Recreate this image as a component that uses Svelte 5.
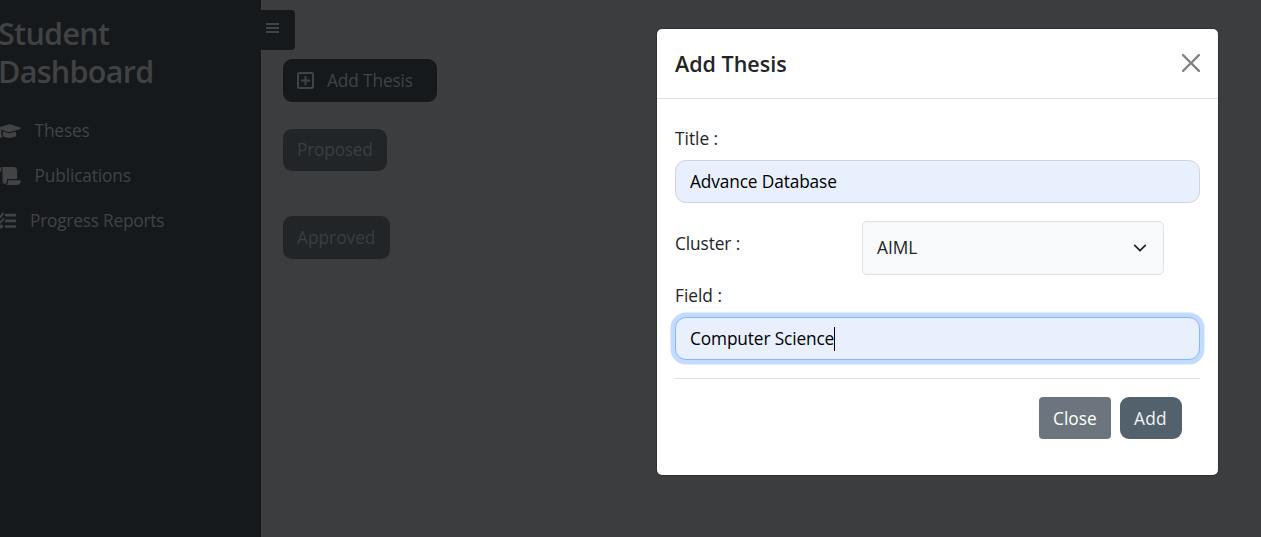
<script lang="ts">
  let title = $state('Advance Database');
  let field = $state('Computer Science');
</script>

<div class="page">
  <aside class="sidebar">
    <h1>Student<br />Dashboard</h1>
    <nav>
      <a class="theses" href="#theses">
        <svg width="23" height="18" viewBox="0 0 640 512"><path fill="currentColor" d="M622.34 153.2L343.4 67.5c-15.2-4.67-31.6-4.67-46.79 0L17.66 153.2c-23.54 7.23-23.54 38.36 0 45.59l48.63 14.94c-10.67 13.19-17.23 29.28-17.88 46.9C38.78 266.15 32 276.11 32 288c0 10.78 5.68 19.85 13.86 25.65L20.33 428.53C18.11 438.52 25.71 448 35.94 448h56.11c10.24 0 17.84-9.48 15.62-19.47L82.14 313.65C90.32 307.85 96 298.78 96 288c0-11.57-6.47-21.25-15.66-26.87.76-15.02 8.44-28.3 20.69-36.72L296.6 284.5c9.06 2.78 26.44 6.25 46.79 0l278.95-85.7c23.55-7.24 23.55-38.36 0-45.6zM352.79 315.09c-28.53 8.76-52.84 3.92-65.59 0l-145.02-44.55L128 384c0 35.35 85.96 64 192 64s192-28.65 192-64l-14.18-113.47-145.03 44.56z" /></svg>
        <span>Theses</span>
      </a>
      <a class="publications" href="#publications">
        <svg width="23" height="18" viewBox="0 0 23 18"><path fill="currentColor" d="M1.7 0C.8 0 0 .8 0 1.7V4c0 .3.3.6.6.6h2.8V1.7C3.4.8 2.6 0 1.7 0zM3.9 0H16c1.7 0 3.1 1.4 3.1 3.2v8.9H9v2.4c0 1.4-1 2.3-2.2 2.3-1.3 0-2.3-1-2.3-2.3V1.7C4.5 1.1 4.3.5 3.9 0zM10.1 13.2h12.3c.3 0 .6.3.6.6 0 2.2-1.7 4.2-3.9 4.2H6.9c1.8 0 3.2-1.4 3.2-3.2z" /></svg>
        <span>Publications</span>
      </a>
      <a class="reports" href="#reports">
        <svg width="18" height="18" viewBox="0 0 18 18"><path d="M.6 3.3 2.4 4.8 5.2 1.4M.6 8.9 2.4 10.5 5.2 7.1" fill="none" stroke="currentColor" stroke-width="1.9" stroke-linecap="round" /><circle cx="3.1" cy="14.5" r="1.9" fill="currentColor" /><path d="M8 3.1h9.2M8 8.9h9.2M8 14.5h9.2" stroke="currentColor" stroke-width="2.7" stroke-linecap="round" /></svg>
        <span>Progress Reports</span>
      </a>
    </nav>
  </aside>

  <main>
    <button class="toggle" aria-label="Menu">
      <svg width="13" height="11" viewBox="0 0 13 11"><path d="M0 1h13M0 5h13M0 9h13" stroke="currentColor" stroke-width="2" /></svg>
    </button>
    <div class="actions">
      <button class="pill add-thesis">
        <svg width="17" height="17" viewBox="0 0 17 17"><rect x="1" y="1" width="15" height="15" rx="1.2" fill="none" stroke="currentColor" stroke-width="2" /><path d="M8.5 4v9M4 8.5h9" stroke="currentColor" stroke-width="2" /></svg>
        <span>Add Thesis</span>
      </button>
      <button class="pill muted proposed"><span>Proposed</span></button>
      <button class="pill muted approved"><span>Approved</span></button>
    </div>
  </main>
</div>

<div class="modal" role="dialog" aria-label="Add Thesis">
  <header>
    <h2>Add Thesis</h2>
    <button class="dismiss" aria-label="Close">
      <svg width="18" height="18" viewBox="0 0 16 16"><path fill="currentColor" d="M.293.293a1 1 0 011.414 0L8 6.586 14.293.293a1 1 0 111.414 1.414L9.414 8l6.293 6.293a1 1 0 01-1.414 1.414L8 9.414l-6.293 6.293a1 1 0 01-1.414-1.414L6.586 8 .293 1.707a1 1 0 010-1.414z" /></svg>
    </button>
  </header>
  <div class="body">
    <div class="label title-label"><span>Title :</span></div>
    <div class="control"><span class="advance">{title}</span></div>
    <div class="cluster">
      <div class="label cluster-label"><span>Cluster :</span></div>
      <div class="select">
        <span>AIML</span>
        <svg width="14" height="14" viewBox="0 0 16 16"><path d="m2 5 6 6 6-6" fill="none" stroke="#212529" stroke-width="2" stroke-linecap="round" stroke-linejoin="round" /></svg>
      </div>
    </div>
    <div class="label field-label"><span>Field :</span></div>
    <div class="control focused"><span class="science">{field}</span><i class="caret"></i></div>
    <footer>
      <button class="close"><span>Close</span></button>
      <button class="add"><span>Add</span></button>
    </footer>
  </div>
</div>

<style>
  :global(body) { margin: 0; background: #3c3d3e; overflow: hidden; }
  .page, .modal { font-family: "Open Sans", "Noto Sans", sans-serif; font-size: 17.3px; line-height: 27px; letter-spacing: -0.13px; }
  .page *, .modal, .modal * { box-sizing: border-box; }
  span { white-space: nowrap; }
  button { font: inherit; letter-spacing: inherit; border: 0; padding: 0; margin: 0; text-align: left; }
  svg { display: block; flex: none; }
  .page { display: flex; width: 1261px; height: 537px; background: #3c3d3e; overflow: hidden; }
  .sidebar { width: 261px; background: #15191c; color: #414345; padding-top: 14px; flex: none; }
  h1 { margin: 0 0 0 -2px; font-size: 30.5px; line-height: 38px; font-weight: 600; letter-spacing: -0.7px; color: #414243; }
  nav { display: flex; flex-direction: column; padding-top: 18px; }
  nav a { height: 45px; display: flex; align-items: center; color: inherit; text-decoration: none; }
  nav svg { margin-left: -2px; margin-right: 13.5px; }
  nav .reports svg { margin-right: 14px; }
  .reports span { letter-spacing: -0.22px; }
  main { flex: 1; padding-top: 10px; }
  .toggle { display: flex; width: 34px; height: 40px; padding: 13px 0 0 5px; background: #15191c; border-radius: 0 4px 4px 0; color: #414345; }
  .actions { display: flex; flex-direction: column; align-items: flex-start; padding: 9px 0 0 22px; }
  .pill { display: flex; align-items: center; height: 43px; padding-left: 14px; border-radius: 9px; background: #15191c; color: #414345; }
  .add-thesis { width: 154px; gap: 13px; }
  .muted { background: #212528; color: #3b3d3f; letter-spacing: -0.2px; }
  .proposed { width: 104px; height: 42px; margin-top: 27px; padding-bottom: 2px; }
  .approved { width: 107px; margin-top: 45px; letter-spacing: 0; }

  .modal { position: absolute; left: 657px; top: 29px; width: 561px; height: 446px; background: #fff; border-radius: 5px; color: #212529; box-shadow: 0 0 0 1px #303132; }
  header { display: flex; justify-content: space-between; height: 70px; padding: 25px 18px 0; border-bottom: 1px solid #dee2e6; }
  h2 { margin: -4px 0 0; font-size: 21.5px; line-height: 28px; font-weight: 600; letter-spacing: 0; white-space: nowrap; }
  .dismiss { width: 18px; height: 18px; background: none; color: #808080; }
  .body { padding: 26px 18px 0; }
  .label { height: 27px; letter-spacing: 0; }
  .control { display: flex; align-items: center; height: 43px; margin-top: 8px; padding-left: 14px; background: #e8f0fe; border: 1px solid #ced4da; border-radius: 11px; color: #000; }
  .control.focused { border-color: #86b7fe; box-shadow: 0 0 0 4.5px #c2dbfe; }
  .caret { width: 1px; height: 24px; background: #000; }
  .cluster { display: flex; margin-top: 18px; height: 54px; }
  .cluster-label { width: 187px; padding-top: 9px; letter-spacing: -0.1px; }
  .select { width: 302px; height: 54px; display: flex; align-items: center; justify-content: space-between; padding: 0 16px 0 14px; background: #f8f9fa; border: 1px solid #dee2e6; border-radius: 5px; }
  .select span { padding-bottom: 2px; letter-spacing: 0; }
  .field-label { margin-top: 7px; }
  footer { display: flex; gap: 9px; justify-content: flex-end; margin-top: 18px; padding: 18px 18px 0 0; border-top: 1px solid #dee2e6; }
  .close, .add { height: 42px; padding-left: 14px; color: #fff; letter-spacing: 0; }
  .close { width: 72px; background: #6c757d; border-radius: 4px; }
  .add { width: 62px; background: #53616c; border-radius: 9px; color: #f0f2f4; letter-spacing: 0.2px; }
</style>
